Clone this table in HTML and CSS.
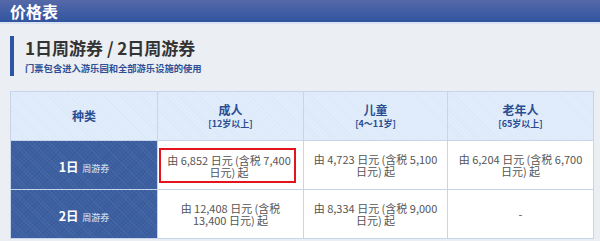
FILE: index.html
```html
<!DOCTYPE html>
<html lang="zh-CN">
<head>
<meta charset="utf-8">
<link rel="stylesheet" href="styles.css">
</head>
<body>
<header class="topbar"><h1 class="topbar-title">价格表</h1></header>
<main class="page">
  <section class="intro">
    <h2 class="intro-title">1日周游券 / 2日周游券</h2>
    <p class="intro-sub">门票包含进入游乐园和全部游乐设施的使用</p>
  </section>
  <table class="prices">
    <colgroup>
      <col class="c1"><col class="c2"><col class="c3"><col class="c4">
    </colgroup>
    <thead>
      <tr>
        <th class="head">种类</th>
        <th class="head">成人<span class="age">[12岁以上]</span></th>
        <th class="head">儿童<span class="age">[4～11岁]</span></th>
        <th class="head">老年人<span class="age">[65岁以上]</span></th>
      </tr>
    </thead>
    <tbody>
      <tr>
        <th class="kind"><b class="days">1日</b> <span class="pass">周游券</span></th>
        <td class="price"><div class="hilite">由 6,852 日元 (含税 7,400 日元) 起</div></td>
        <td class="price">由 4,723 日元 (含税 5,100 日元) 起</td>
        <td class="price">由 6,204 日元 (含税 6,700 日元) 起</td>
      </tr>
      <tr>
        <th class="kind"><b class="days">2日</b> <span class="pass">周游券</span></th>
        <td class="price">由 12,408 日元 (含税 13,400 日元) 起</td>
        <td class="price">由 8,334 日元 (含税 9,000 日元) 起</td>
        <td class="price">-</td>
      </tr>
    </tbody>
  </table>
</main>
</body>
</html>
```

FILE: styles.css
```css
html, body {
  margin: 0;
  padding: 0;
}
body {
  background: #ebeef2;
  font-family: "Noto Sans CJK SC", "Noto Sans", sans-serif;
  color: #555;
}
.topbar {
  height: 22px;
  background: linear-gradient(#5569a8, #3154a0);
  border-bottom: 2px solid #d9e1f2;
  padding: 0 10px;
  box-sizing: content-box;
}
.topbar-title {
  margin: 0;
  font-size: 16px;
  line-height: 22px;
  color: #fff;
  font-weight: 700;
}
.page {
  padding: 12px 7px 0 10px;
}
.intro {
  border-left: 4px solid #2d55a3;
  padding: 1px 0 2px 11px;
  margin-bottom: 15px;
}
.intro-title {
  margin: 0;
  font-size: 17px;
  line-height: 22px;
  color: #333;
  font-weight: 700;
}
.intro-sub {
  margin: 3px 0 0;
  font-size: 9.3px;
  line-height: 12px;
  color: #2e4f96;
  font-weight: 700;
}
.prices {
  width: 583px;
  table-layout: fixed;
  border-collapse: collapse;
  border: 1px solid #c7d5ec;
  background: #fff;
}
.c1 { width: 147px; }
.c2 { width: 146px; }
.c3 { width: 144px; }
.c4 { width: 146px; }
.prices th, .prices td {
  border: 1px solid #c7d5ec;
  padding: 0;
  text-align: center;
  vertical-align: middle;
}
.head {
  height: 48px;
  background-color: #e2edfb;
  background-image: repeating-linear-gradient(45deg, rgba(160,190,230,.12) 0 1px, transparent 1px 3px);
  color: #2b4d92;
  font-size: 12px;
  line-height: 14px;
  font-weight: 700;
}
.age {
  display: block;
  margin-top: 1px;
  font-size: 9px;
  line-height: 12px;
}
.kind {
  height: 48px;
  background-color: #3b5fa1;
  background-image: repeating-linear-gradient(45deg, rgba(255,255,255,.07) 0 1px, transparent 1px 3px),
                    repeating-linear-gradient(-45deg, rgba(0,0,30,.08) 0 1px, transparent 1px 3px);
  color: #fff;
}
.prices tbody tr + tr .kind {
  border-top-color: #98acd6;
}
.days {
  font-size: 12.5px;
  font-weight: 700;
}
.pass {
  font-size: 9px;
  font-weight: 400;
  color: #e4ebf7;
}
.price {
  padding: 0 8px !important;
  font-size: 11px;
  line-height: 12px;
  color: #555;
}
.prices td.price:has(.hilite) {
  padding: 0 7px 0 0 !important;
}
.hilite {
  margin-left: 1px;
  border: 2px solid #e4141c;
  padding: 4px 3px 3px 6px;
}
```
